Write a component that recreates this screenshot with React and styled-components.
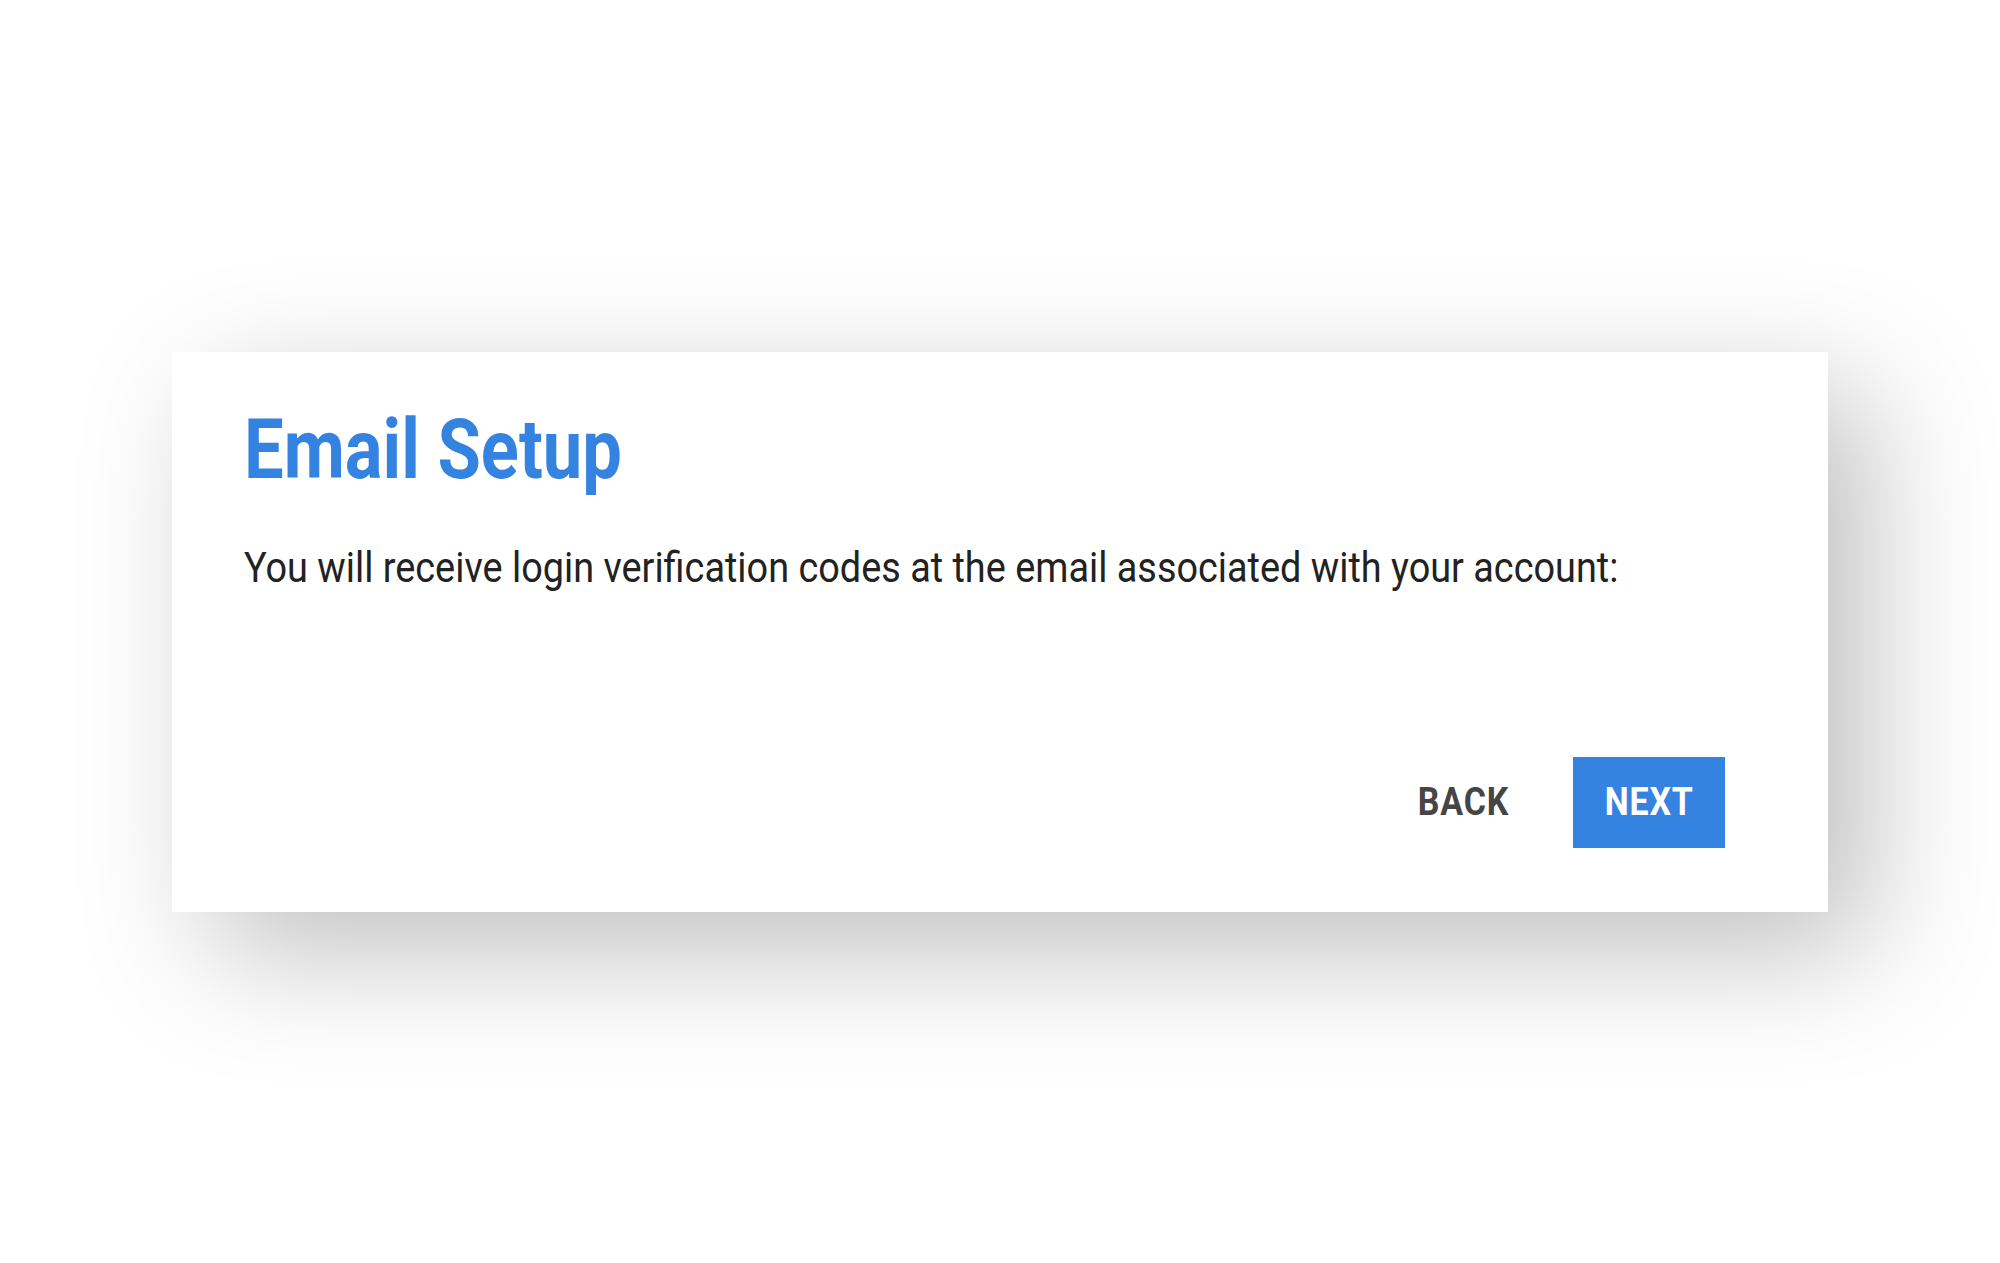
import React from 'react';
import { styled, createGlobalStyle } from "styled-components";

const GlobalStyle = createGlobalStyle`
  html, body {
    margin: 0;
    padding: 0;
    background: #ffffff;
    font-family: Roboto, "Noto Sans", sans-serif;
  }
`

const Page = styled.div`
  display: flex;
  align-items: center;
  justify-content: center;
  min-height: 100vh;
`
const Card = styled.section`
  display: flex;
  flex-direction: column;
  box-sizing: border-box;
  width: 1656px;
  height: 560px;
  padding: 56px 103px 64px 72px;
  background: #ffffff;
  box-shadow: 40px 40px 120px rgba(0, 0, 0, 0.25);
`
const Title = styled.h1`
  margin: 0;
  font-size: 83px;
  line-height: 1;
  font-weight: 700;
  color: #3583e0;
  transform: scaleX(0.85);
  transform-origin: left center;
  white-space: nowrap;
`
const Message = styled.p`
  margin: 55px 0 0;
  font-size: 43px;
  line-height: 1;
  color: #222222;
  transform: scaleX(0.88);
  transform-origin: left center;
  white-space: nowrap;
`
const Actions = styled.div`
  display: flex;
  justify-content: flex-end;
  gap: 33px;
  margin-top: auto;
`
const Button = styled.button`
  width: 152px;
  height: 91px;
  padding: 0;
  border: none;
  border-radius: 0;
  font-family: Roboto, sans-serif;
  font-size: 39px;
  line-height: 91px;
  font-weight: 700;
  letter-spacing: 1px;
  text-align: center;
  cursor: pointer;
  background: ${p => p.primary ? "#3583e0" : "transparent"};
  color: ${p => p.primary ? "#ffffff" : "#454545"};
`
const Label = styled.span`
  display: inline-block;
  transform: scaleX(0.87);
`

export default function App() {
  return (
    <Page>
      <GlobalStyle />
      <Card>
        <Title>Email Setup</Title>
        <Message>You will receive login verification codes at the email associated with your account:</Message>
        <Actions>
          <Button><Label>BACK</Label></Button>
          <Button primary><Label>NEXT</Label></Button>
        </Actions>
      </Card>
    </Page>
  );
}
